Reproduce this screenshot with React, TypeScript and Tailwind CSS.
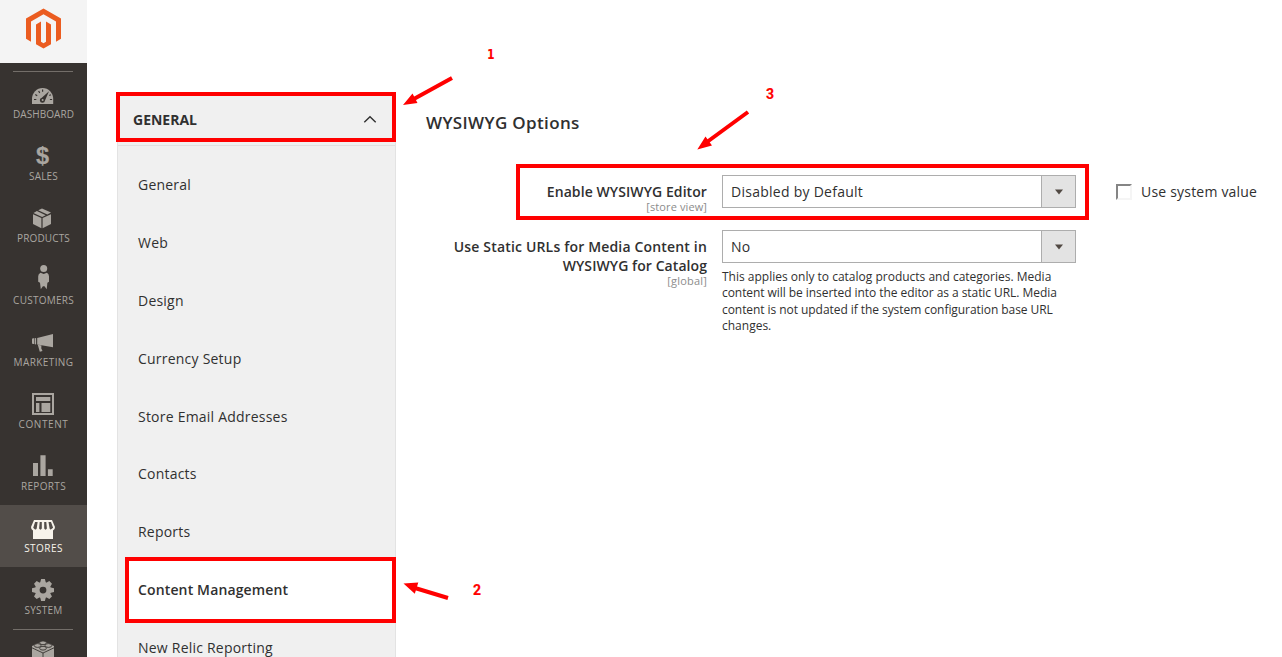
import React from "react";

const navIcons: Record<string, React.ReactNode> = {
  DASHBOARD: (
    <>
      <path d="M32 33V28a10.6 11 0 0 1 21.2 0v5z" />
      <g className="stroke-[#373330]" strokeWidth="1.2" fill="none">
        <path d="M34 28.5h2.3M35.3 23.5l1.9 1.2M38.6 20l1.2 1.9M42.6 18.6v2.2M49.9 28.5h2.2M49.3 24.6l1.6-.9" />
      </g>
      <path className="fill-[#373330]" d="M49 20.2l-4 9.2a2.6 2.6 0 1 1-3.2-2.7z" />
      <circle cx="42.6" cy="29.1" r="1" />
    </>
  ),
  SALES: (
    <text x="42.6" y="30.8" textAnchor="middle" className="font-['Liberation_Sans'] text-[23.5px] font-bold" stroke="currentColor" strokeWidth="0.2">$</text>
  ),
  PRODUCTS: (
    <>
      <path d="M33 19.3l8.4 3.8v10.1L33 29z M51 19.3l-8.4 3.8v10.1L51 29z" />
      <path d="M38.2 15.3l3.8-1.9 9 4.1-3.7 2z M33.5 17.9l3.4-1.8 8.8 4.2-3.6 1.8z" />
    </>
  ),
  CUSTOMERS: (
    <>
      <circle cx="43.7" cy="11.6" r="3.5" />
      <path d="M40.5 15.7l3.2 1.3 3.2-1.3q2.1 1 2.1 3.5v5.5l-1.6 1.1-.7 6.5-2.2-3h-1.6l-2.1 3-.8-6.5-1.8-1.1v-5.5q0-2.5 2.3-3.5z" />
    </>
  ),
  MARKETING: (
    <path d="M37.2 19v6.4l15.8 2.8V15z M36.1 19.2v6.1l-1.2.1v-6.3z M34.3 19.3v5.7h-1.7l-.6-1v-3.7l.6-1z M37.8 25.7l2 7.1 2.7-.8-1.2-2.5 .1-3z" />
  ),
  CONTENT: (
    <>
      <path fillRule="evenodd" d="M32 12h22v22H32z M34 14v18h18V14z" />
      <path d="M36 16h14.3v4H36z M36 22h3.4v9H36z M41.5 22h8.8v9h-8.8z" />
    </>
  ),
  REPORTS: <path d="M33 20h5v13h-5z M40.4 12.3h5.2V33h-5.2z M47.9 26.3h4.8V33h-4.8z" />,
  STORES: (
    <>
      <path d="M34 15h18l3 7q0 3-2 3.4V34H33v-8.6q-2-.4-2-3.4z" />
      <path className="fill-[#524d49]" d="M35.1 17h2.5l-.9 6.5q-1 1.9-2.2.4l-1.3-1.2z M39.7 17h2.1v6.6q-1.3 2.3-2.7 0z M44.2 17h2.1l.6 6.6q-1.4 2.3-2.7 0z M48.5 17H51l2.1 5.7-1.6 1.4q-1.2 1-1.9-.6z" />
    </>
  ),
  SYSTEM: (
    <>
      <g transform="translate(43 23.1)">
        <circle r="8" />
        <path d="M-3.2-6L-1.9-11h3.8L3.2-6z M-3.2 6l1.3 5h3.8l1.3-5z M-6-3.2L-11-1.9v3.8L-6 3.2z M6-3.2l5 1.3v3.8L6 3.2z" />
        <path transform="rotate(45)" d="M-3.2-6L-1.9-10.8h3.8L3.2-6z M-3.2 6l1.3 4.8h3.8l1.3-4.8z M-6-3.2l-4.8 1.3v3.8L-6 3.2z M6-3.2l4.8 1.3v3.8L6 3.2z" />
      </g>
      <circle className="fill-[#373330]" cx="43" cy="23.1" r="3.4" />
    </>
  ),
};

const navItems = [
  { name: "DASHBOARD", tracking: "tracking-[0.05px]" },
  { name: "SALES", tracking: "tracking-[0.15px]" },
  { name: "PRODUCTS", tracking: "tracking-[0.15px]" },
  { name: "CUSTOMERS", tracking: "tracking-[0.25px]" },
  { name: "MARKETING", tracking: "tracking-[0.4px]" },
  { name: "CONTENT", tracking: "tracking-[0.6px]" },
  { name: "REPORTS", tracking: "tracking-[0.35px]" },
  { name: "STORES", tracking: "tracking-[0.45px]" },
  { name: "SYSTEM", tracking: "tracking-[0.2px]" },
];

function NavItem({ name, tracking }: { name: string; tracking: string }) {
  const active = name === "STORES";
  return (
    <li className={`flex h-[62px] flex-col items-center ${active ? "bg-[#524d49] text-[#f7f3eb]" : "text-[#aaa6a0]"}`}>
      <svg width="87" height="36" viewBox="0 0 87 36" className="shrink-0" fill="currentColor">
        {navIcons[name]}
      </svg>
      <span className={`text-[10px] leading-[14px] ${tracking}`}>{name}</span>
    </li>
  );
}

function Sidebar() {
  return (
    <aside className="h-full w-[87px] shrink-0 overflow-hidden bg-[#373330]">
      <div className="h-[63px] bg-[#f4f4f4]">
        <svg width="87" height="63" viewBox="0 0 87 63" fill="#eb5c20">
          <path d="M43.5 8.4L61 18.5v20.3l-5 2.9V21.4L43.5 14.2 31 21.4v20.3l-5-2.9V18.5z" />
          <path d="M41 21.5v20.3l2.5 1.5 2.5-1.5V21.5l5 2.9v19.8l-7.5 4.4-7.5-4.4V24.4z" />
        </svg>
      </div>
      <div className="ml-[13px] mt-2 h-px w-[60px] bg-[#736e69]" />
      <ul className="-mt-px">
        {navItems.map((n) => <NavItem key={n.name} {...n} />)}
      </ul>
      <div className="ml-[13px] h-px w-[60px] bg-[#736e69]" />
      <svg width="87" height="30" viewBox="0 1 87 30" fill="#aaa6a0">
        <path d="M32 17l11-5 11 5v13H32z" />
        <g stroke="#373330" strokeWidth="0.9">
          <path fill="none" d="M32 18.8l11 5.2 11-5.2M43 24v7" />
          <ellipse cx="43" cy="13.8" rx="3.4" ry="1.9" />
          <ellipse cx="37.6" cy="16.5" rx="3.4" ry="1.9" />
          <ellipse cx="48.4" cy="16.5" rx="3.4" ry="1.9" />
          <ellipse cx="43" cy="19.2" rx="3.4" ry="1.9" />
        </g>
      </svg>
    </aside>
  );
}

const sections = ["General", "Web", "Design", "Currency Setup", "Store Email Addresses", "Contacts", "Reports", "Content Management", "New Relic Reporting"];

function ConfigTabs() {
  return (
    <nav className="ml-[29px] w-[280px] shrink-0 pt-[92px]">
      <div className="flex h-[50px] items-center justify-between border-4 border-[#ff0000] bg-[#f0f0f0] pl-[13px] pr-[15px] pt-[5px]">
        <h2 className="text-[14px] font-bold leading-5">GENERAL</h2>
        <svg width="14" height="9" viewBox="0 0 14 9" fill="none" stroke="#303030" strokeWidth="1.4">
          <path d="M1.3 7.2L7 1.7l5.7 5.5" />
        </svg>
      </div>
      <div className="ml-px h-[600px] border-x border-[#e3e3e3] bg-[#f0f0f0]">
        <div className="h-1 border-b border-[#e0e0e0]" />
        <ul className="pt-[10px]">
          {sections.map((s) =>
            s === "Content Management" ? (
              <li key={s} className="-mr-px -mb-[4.6px] -mt-[3.6px] ml-[7px] flex h-[66px] items-center border-4 border-[#ff0000] bg-white pl-[9px] text-[14px] font-semibold tracking-[0.14px]">{s}</li>
            ) : (
              <li key={s} className="flex h-[57.8px] items-center pl-5 text-[14px] tracking-[0.22px]">{s}</li>
            )
          )}
        </ul>
      </div>
    </nav>
  );
}

function Select({ value }: { value: string }) {
  return (
    <div className="flex h-[33px] w-[354px] shrink-0 border border-[#adadad] bg-white">
      <span className="flex-1 pl-2 text-[14px] leading-[32px] tracking-[0.26px]">{value}</span>
      <span className="flex w-[34px] items-center justify-center border-l border-[#adadad] bg-[#e3e3e3]">
        <svg width="8" height="6" viewBox="0 0 8 6" fill="#514943"><path d="M0 .5h8L4 5.5z" /></svg>
      </span>
    </div>
  );
}

function Settings() {
  return (
    <main className="w-[886px] shrink-0 pl-[30px] pt-[110px]">
      <h1 className="h-[54px] text-[17px] font-semibold leading-[26px] tracking-[0.35px]">WYSIWYG Options</h1>
      <div className="flex">
        <div className="ml-[90px] flex h-14 w-[573px] border-4 border-[#ff0000] pt-[7px]">
          <div className="w-[187px] pt-[7px] text-right">
            <div className="text-[14px] font-semibold leading-[19px] tracking-[0.08px]">Enable WYSIWYG Editor</div>
            <div className="text-[11px] leading-3 tracking-[0.1px] text-[#8c8c8c]">[store view]</div>
          </div>
          <div className="ml-[15px]"><Select value="Disabled by Default" /></div>
        </div>
        <label className="ml-[27px] mt-[17px] flex h-5 items-center whitespace-nowrap text-[14px] tracking-[0.2px]">
          <span className="mr-[9px] mt-[2px] h-4 w-4 border-2 border-b-[#f5f5f5] border-l-[#858585] border-r-[#f5f5f5] border-t-[#858585]" />
          Use system value
        </label>
      </div>
      <div className="mt-[10px] flex">
        <div className="w-[281px] pt-[7px] text-right">
          <div className="whitespace-nowrap text-[14px] font-semibold leading-[19px]">
            <span className="tracking-[0.17px]">Use Static URLs for Media Content in</span><br />
            <span className="tracking-[0.07px]">WYSIWYG for Catalog</span>
          </div>
          <div className="text-[11px] leading-3 tracking-[0.2px] text-[#8c8c8c]">[global]</div>
        </div>
        <div className="ml-[15px]">
          <Select value="No" />
          <p className="mt-[6px] whitespace-nowrap text-[12px] leading-[16.3px]">
            This applies only to catalog products and categories. Media<br />
            <span className="tracking-[-0.06px]">content will be inserted into the editor as a static URL. Media</span><br />
            <span className="tracking-[-0.06px]">content is not updated if the system configuration base URL</span><br />
            changes.
          </p>
        </div>
      </div>
    </main>
  );
}

function Callouts() {
  return (
    <svg className="pointer-events-none absolute left-0 top-0" width="1282" height="657" viewBox="0 0 1282 657" fill="#ff0000">
      <g stroke="#ff0000" strokeWidth="4">
        <path d="M452 78L412 100M448 598L415 588M748 112L707 142" />
      </g>
      <path d="M403 105l9.5-11.5 5 9.5z M403.5 583.5l14.8-1-3.5 11.3z M697.3 149.5l8.2-13 6.5 9z" />
      <g className="text-[14px] font-bold" stroke="#ff0000" strokeWidth="0.2" textAnchor="middle">
        <text transform="translate(490.8 59) scale(0.85 1)" className="font-['DejaVu_Sans_Condensed'] text-[13.5px]">1</text>
        <text x="477" y="595" className="font-['Roboto']">2</text>
        <text x="770" y="99" className="font-['Roboto']">3</text>
      </g>
    </svg>
  );
}

export default function App() {
  return (
    <div className="relative flex h-[657px] w-[1282px] overflow-hidden bg-white font-['Open_Sans',sans-serif] text-[#303030]">
      <Sidebar />
      <ConfigTabs />
      <Settings />
      <Callouts />
    </div>
  );
}
